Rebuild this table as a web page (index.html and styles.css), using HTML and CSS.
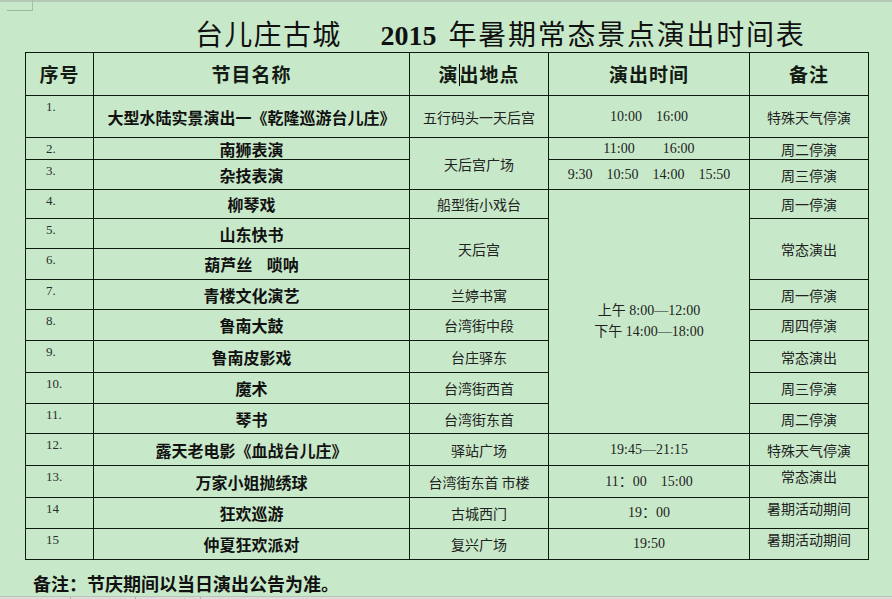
FILE: index.html
```html
<!DOCTYPE html>
<html lang="zh-CN">
<head>
<meta charset="utf-8">
<title>台儿庄古城 2015年暑期常态景点演出时间表</title>
<link rel="stylesheet" href="styles.css">
</head>
<body>
<div class="topline"><span class="corner"></span></div>
<h1 class="title"><span class="t-cn">台儿庄古城</span><span class="t-year">2015</span><span class="t-cn2">年暑期常态景点演出时间表</span></h1>
<table class="sched">
  <colgroup>
    <col class="c-no"><col class="c-name"><col class="c-place"><col class="c-time"><col class="c-note">
  </colgroup>
  <thead>
    <tr class="h-head">
      <th>序号</th><th>节目名称</th><th>演<span class="caret"></span>出地点</th><th>演出时间</th><th>备注</th>
    </tr>
  </thead>
  <tbody>
    <tr class="h42"><td class="no">1.</td><td class="name">大型水陆实景演出一《乾隆巡游台儿庄》</td><td class="place">五行码头一天后宫</td><td class="time">10:00&nbsp;&nbsp;&nbsp;&nbsp;16:00</td><td class="note">特殊天气停演</td></tr>
    <tr class="h22"><td class="no">2.</td><td class="name">南狮表演</td><td class="place" rowspan="2">天后宫广场</td><td class="time">11:00&nbsp;&nbsp;&nbsp;&nbsp;&nbsp;&nbsp;&nbsp;&nbsp;16:00</td><td class="note">周二停演</td></tr>
    <tr class="h30"><td class="no">3.</td><td class="name">杂技表演</td><td class="time">9:30&nbsp;&nbsp;&nbsp;&nbsp;10:50&nbsp;&nbsp;&nbsp;&nbsp;14:00&nbsp;&nbsp;&nbsp;&nbsp;15:50</td><td class="note">周三停演</td></tr>
    <tr class="h29"><td class="no">4.</td><td class="name">柳琴戏</td><td class="place">船型街小戏台</td><td class="time merged" rowspan="8">上午 8:00—12:00<br>下午 14:00—18:00</td><td class="note">周一停演</td></tr>
    <tr class="h30"><td class="no">5.</td><td class="name">山东快书</td><td class="place" rowspan="2">天后宫</td><td class="note" rowspan="2">常态演出</td></tr>
    <tr class="h31"><td class="no">6.</td><td class="name">葫芦丝&nbsp;&nbsp;&nbsp;&nbsp;唢呐</td></tr>
    <tr class="h30"><td class="no">7.</td><td class="name">青楼文化演艺</td><td class="place">兰婷书寓</td><td class="note">周一停演</td></tr>
    <tr class="h31"><td class="no">8.</td><td class="name">鲁南大鼓</td><td class="place">台湾街中段</td><td class="note">周四停演</td></tr>
    <tr class="h32"><td class="no">9.</td><td class="name">鲁南皮影戏</td><td class="place">台庄驿东</td><td class="note">常态演出</td></tr>
    <tr class="h31"><td class="no">10.</td><td class="name">魔术</td><td class="place">台湾街西首</td><td class="note">周三停演</td></tr>
    <tr class="h30"><td class="no">11.</td><td class="name">琴书</td><td class="place">台湾街东首</td><td class="note">周二停演</td></tr>
    <tr class="h32"><td class="no">12.</td><td class="name">露天老电影《血战台儿庄》</td><td class="place">驿站广场</td><td class="time">19:45—21:15</td><td class="note">特殊天气停演</td></tr>
    <tr class="h32"><td class="no">13.</td><td class="name">万家小姐抛绣球</td><td class="place">台湾街东首&nbsp;市楼</td><td class="time">11：00&nbsp;&nbsp;&nbsp;&nbsp;15:00</td><td class="note top">常态演出</td></tr>
    <tr class="h31"><td class="no">14</td><td class="name">狂欢巡游</td><td class="place">古城西门</td><td class="time">19：00</td><td class="note top">暑期活动期间</td></tr>
    <tr class="h31"><td class="no">15</td><td class="name">仲夏狂欢派对</td><td class="place">复兴广场</td><td class="time">19:50</td><td class="note top">暑期活动期间</td></tr>
  </tbody>
</table>
<p class="remark">备注：节庆期间以当日演出公告为准。</p>
<div class="tabbar"><span class="tab t1"></span><span class="tab t2"></span><span class="tab t3"></span><span class="tab rest"></span></div>
</body>
</html>
```
FILE: styles.css
```css
html, body {
  margin: 0;
  padding: 0;
  background: #c8e9c9;
}
body {
  width: 892px;
  height: 599px;
  overflow: hidden;
  font-family: "Noto Sans CJK SC", sans-serif;
  color: #141a14;
  display: flex;
  flex-direction: column;
}
.topline {
  position: relative;
  height: 2px;
  background: #b4c9b4;
  flex: none;
}
.corner {
  position: absolute;
  left: 7px;
  top: 0;
  width: 25px;
  height: 10px;
  border-right: 1px solid #a9bca9;
  border-bottom: 1px solid #9fb39f;
}
.title {
  margin: 0;
  padding: 14px 0 0 195px;
  height: 36px;
  line-height: 34px;
  font-size: 28px;
  font-weight: normal;
  white-space: nowrap;
  color: #111;
  flex: none;
}
.t-cn {
  font-family: "Noto Sans CJK SC", sans-serif;
  letter-spacing: 1.3px;
}
.t-year {
  font-family: "Liberation Serif", serif;
  font-weight: bold;
  margin-left: 39px;
  margin-right: 12px;
}
.t-cn2 {
  letter-spacing: 1.75px;
}
.sched {
  margin-left: 25px;
  width: 843px;
  border-collapse: collapse;
  table-layout: fixed;
  flex: none;
}
.c-no { width: 68px; }
.c-name { width: 316px; }
.c-place { width: 139px; }
.c-time { width: 201px; }
.c-note { width: 119px; }
.sched th, .sched td {
  border: 1px solid #0f1a0f;
  padding: 0;
  text-align: center;
  vertical-align: middle;
  white-space: nowrap;
  overflow: hidden;
}
.sched th {
  font-size: 19px;
  font-weight: bold;
  letter-spacing: 1px;
  line-height: 24px;
}
.caret {
  display: inline-block;
  width: 1px;
  height: 22px;
  background: #000;
  vertical-align: -4px;
}
.h-head { height: 43px; }
.h42 { height: 42px; }
.h22 { height: 22px; }
.h29 { height: 29px; }
.h30 { height: 30px; }
.h31 { height: 31px; }
.h32 { height: 32px; }
.sched td.no {
  text-align: left;
  vertical-align: top;
  padding: 3px 0 0 20px;
  font-family: "Liberation Serif", serif;
  font-size: 13px;
  line-height: 15px;
  color: #2a2f2a;
}
.sched td.name {
  font-size: 16px;
  font-weight: bold;
  line-height: 20px;
  color: #111;
}
.sched td.place {
  font-size: 14px;
  line-height: 18px;
  color: #222;
}
.sched td.time {
  font-family: "Liberation Serif", "Noto Sans CJK SC", serif;
  font-size: 14px;
  line-height: 18px;
  color: #222;
}
.sched td.merged {
  line-height: 21px;
  padding-top: 18px;
}
.sched td.note {
  font-size: 14px;
  line-height: 18px;
  color: #222;
}
.sched td.note.top {
  vertical-align: top;
  padding-top: 1px;
}
.remark {
  margin: 10px 0 0 33px;
  font-size: 18px;
  font-weight: bold;
  line-height: 26px;
  height: 26px;
  color: #111;
  flex: none;
}
.tabbar {
  margin-top: auto;
  height: 5px;
  display: flex;
  background: #d9dcd9;
  border-top: 1px solid #b9c3b9;
  flex: none;
}
.tab {
  height: 100%;
  border-right: 1px solid #aab3aa;
}
.t1 { width: 70px; }
.t2 { width: 64px; }
.t3 { width: 64px; }
.rest { flex: 1; border-right: none; }
```
